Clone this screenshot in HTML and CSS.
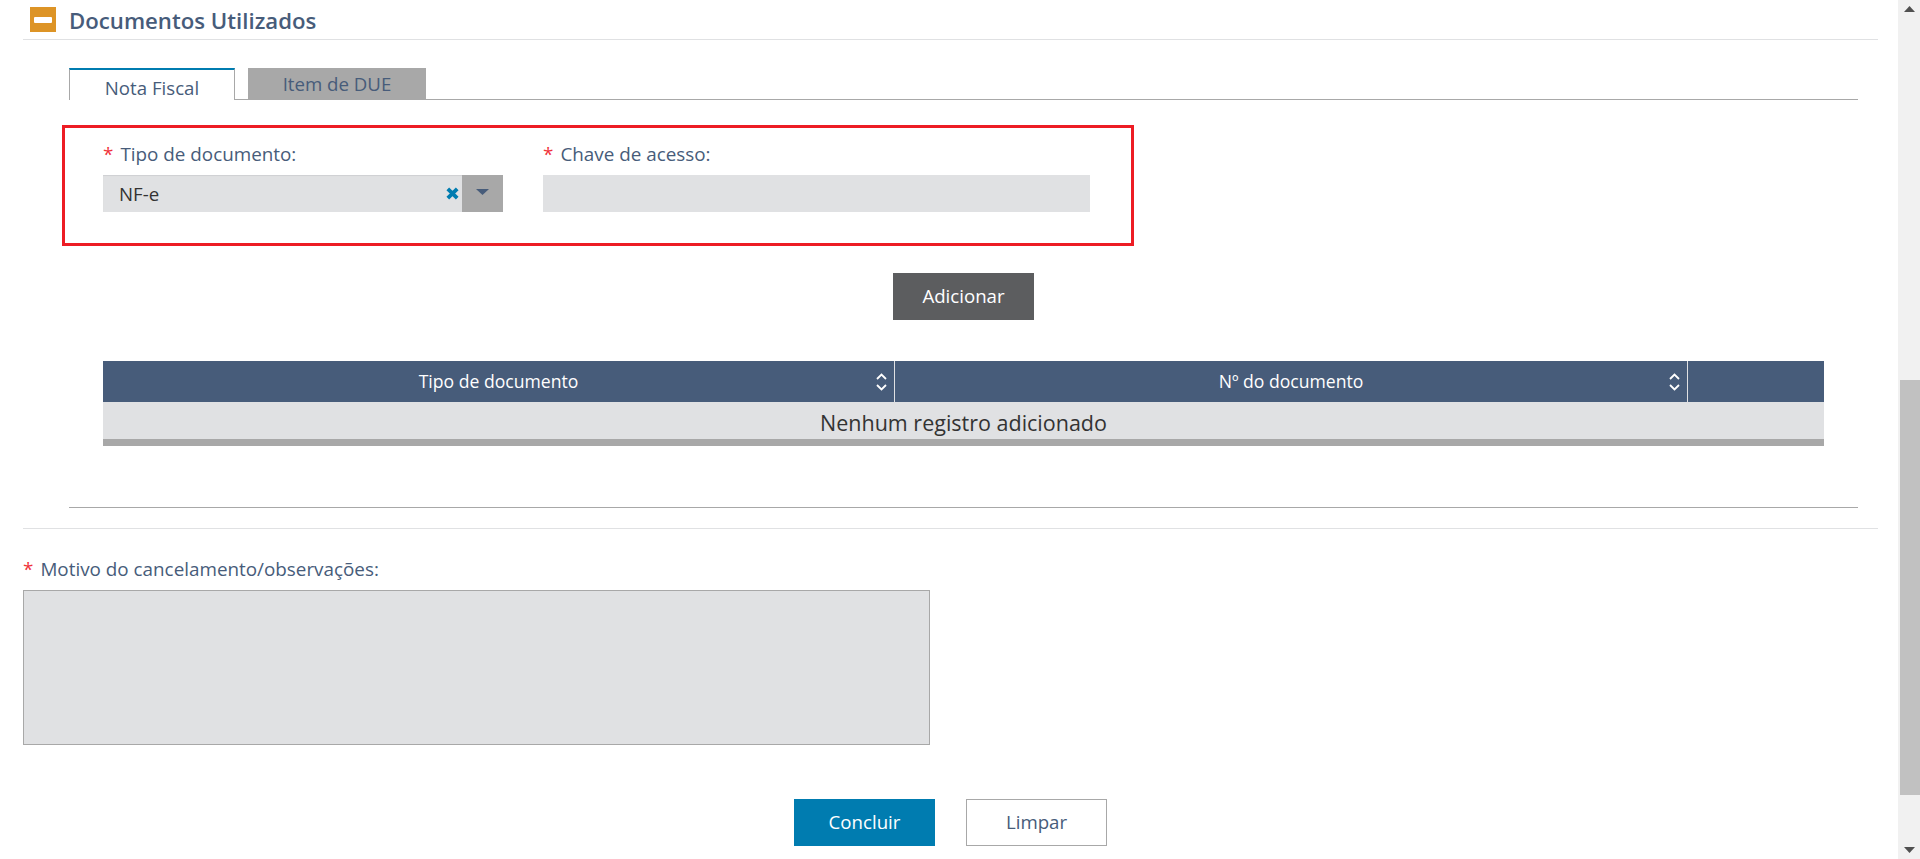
FILE: index.html
```html
<!DOCTYPE html>
<html lang="pt-BR">
<head>
<meta charset="utf-8">
<title>Documentos Utilizados</title>
<link rel="stylesheet" href="styles.css">
</head>
<body>
<div class="page">
  <main class="content">
    <header class="section-head">
      <span class="toggle"><span class="toggle-bar"></span></span>
      <h2 class="section-title">Documentos Utilizados</h2>
    </header>
    <section class="panel">
      <nav class="tabs">
        <a class="tab tab-active">Nota Fiscal</a>
        <a class="tab tab-idle">Item de DUE</a>
      </nav>
      <div class="highlight">
        <div class="field">
          <label class="label"><span class="req">*</span>Tipo de documento:</label>
          <div class="select">
            <span class="select-value">NF-e</span>
            <svg class="clear" width="13" height="13" viewBox="0 0 13 13"><path d="M1.800 1.800l9.400 9.400M11.200 1.800l-9.400 9.400" stroke="#007cb0" stroke-width="3.800" fill="none"/></svg>
            <span class="select-btn"><svg width="13" height="6" viewBox="0 0 13 6"><path d="M0 0h13L6.500 6z" fill="#475c7a"/></svg></span>
          </div>
        </div>
        <div class="field">
          <label class="label"><span class="req">*</span>Chave de acesso:</label>
          <div class="input"></div>
        </div>
      </div>
      <div class="add-row"><button class="btn btn-dark">Adicionar</button></div>
      <table class="grid">
        <colgroup><col class="col-a"><col class="col-b"><col></colgroup>
        <thead>
          <tr>
            <th>Tipo de documento<svg class="sort" width="11" height="18" viewBox="0 0 11 18"><path d="M1 6l4.500-4.500L10 6M1 12l4.500 4.500L10 12" stroke="#fff" stroke-width="1.800" fill="none"/></svg></th>
            <th>Nº do documento<svg class="sort" width="11" height="18" viewBox="0 0 11 18"><path d="M1 6l4.500-4.500L10 6M1 12l4.500 4.500L10 12" stroke="#fff" stroke-width="1.800" fill="none"/></svg></th>
            <th></th>
          </tr>
        </thead>
        <tbody>
          <tr><td colspan="3">Nenhum registro adicionado</td></tr>
        </tbody>
      </table>
    </section>
    <div class="notes">
      <label class="label"><span class="req">*</span>Motivo do cancelamento/observações:</label>
      <div class="textarea"></div>
    </div>
    <div class="actions">
      <button class="btn btn-primary">Concluir</button>
      <button class="btn btn-outline">Limpar</button>
    </div>
  </main>
  <aside class="scrollbar">
    <svg class="arrow" width="11" height="6" viewBox="0 0 11 6"><path d="M5.500 0L11 6H0z" fill="#505050"/></svg>
    <div class="thumb"></div>
    <svg class="arrow arrow-down" width="11" height="6" viewBox="0 0 11 6"><path d="M0 0h11L5.500 6z" fill="#505050"/></svg>
  </aside>
</div>
</body>
</html>
```
FILE: styles.css
```css
* { box-sizing: border-box; }
html, body { margin: 0; padding: 0; height: 100%; overflow: hidden; background: #fff; }
body { font-family: "Open Sans", "Noto Sans", sans-serif; font-size: 16px; color: #475c7a; }
.page { display: flex; height: 859px; }
.content { flex: 1; min-width: 0; padding: 0 20px 0 23px; }

.section-head { display: flex; align-items: flex-start; height: 40px; padding: 7px 0 0 7px; border-bottom: 1px solid #e0e1e3; }
.toggle { width: 26px; height: 25px; background: #dd9426; display: flex; align-items: center; justify-content: center; }
.toggle-bar { width: 18px; height: 6px; background: #fff; border-radius: 1px; }
.section-title { margin: 0 0 0 13px; font-size: 22.2px; line-height: 28px; font-weight: 600; color: #475c7a; }

.panel { margin: 28px 20px 0 46px; border-bottom: 1px solid #a8a8a8; padding-bottom: 61px; }
.tabs { display: flex; gap: 13px; height: 32px; border-bottom: 1px solid #a8a8a8; }
.tab { display: block; text-align: center; font-size: 18.67px; }
.tab-active { width: 166px; height: 32px; background: #fff; border: 1px solid #a8a8a8; border-top: 2px solid #007cb0; border-bottom: 0; line-height: 36px; }
.tab-idle { width: 178px; height: 31px; background: #a8a8a8; line-height: 32px; }

.highlight { display: flex; gap: 40px; width: 1072px; height: 121px; margin: 25px 0 0 -7px; padding: 15px 0 0 38px; border: 3px solid #ed1c24; }
.field { display: flex; flex-direction: column; gap: 10px; }
.label { display: block; font-size: 18.85px; line-height: 22px; color: #475c7a; }
.req { color: #f0323a; margin-right: 7px; }
.select { display: flex; align-items: center; width: 400px; height: 37px; background: #e0e1e3; box-shadow: inset 0 1px 1px #cfd0d2; }
.select-value { flex: 1; padding-left: 16px; font-size: 18.67px; color: #333; }
.clear { margin-right: 3px; }
.select-btn { display: flex; justify-content: center; width: 41px; height: 37px; padding-top: 14px; background: #a8a8a8; }
.input { width: 547px; height: 37px; background: #e0e1e3; }

.btn { display: block; height: 47px; width: 141px; padding: 0 0 2px; border: 0; font: 18.67px/45px "Open Sans", "Noto Sans", sans-serif; text-align: center; }
.add-row { display: flex; justify-content: center; margin-top: 27px; }
.btn-dark { background: #5c5d5f; color: #fff; }
.btn-primary { background: #007cb0; color: #fff; }
.btn-outline { background: #fff; color: #475c7a; border: 1px solid #a8a8a8; line-height: 43px; }

.grid { width: 1721px; margin: 41px 0 0 34px; border-collapse: separate; border-spacing: 0; table-layout: fixed; }
.col-a { width: 792px; }
.col-b { width: 793px; }
.grid th { position: relative; height: 41px; padding: 0 0 2px; background: #475c7a; color: #fff; font-size: 17.6px; font-weight: 500; border-right: 1px solid #e0e1e3; }
.grid th:last-child { border-right: 0; }
.grid td { height: 44px; padding: 3px 0 0; background: #e0e1e3; border-bottom: 7px solid #a8a8a8; text-align: center; font-size: 21.5px; color: #333; }
.sort { position: absolute; right: 7px; top: 12px; }

.notes { margin-top: 20px; padding-top: 29px; border-top: 1px solid #e0e1e3; }
.textarea { width: 907px; height: 155px; margin-top: 10px; background: #e0e1e3; border: 1px solid #a8a8a8; }
.actions { display: flex; justify-content: center; gap: 31px; margin-top: 54px; }

.scrollbar { position: relative; flex: none; width: 22px; height: 859px; background: #f1f1f1; }
.arrow { position: absolute; left: 6px; top: 6px; }
.arrow-down { top: auto; bottom: 6px; }
.thumb { position: absolute; left: 2px; right: 0; top: 380px; height: 415px; background: #c1c1c1; }
```
